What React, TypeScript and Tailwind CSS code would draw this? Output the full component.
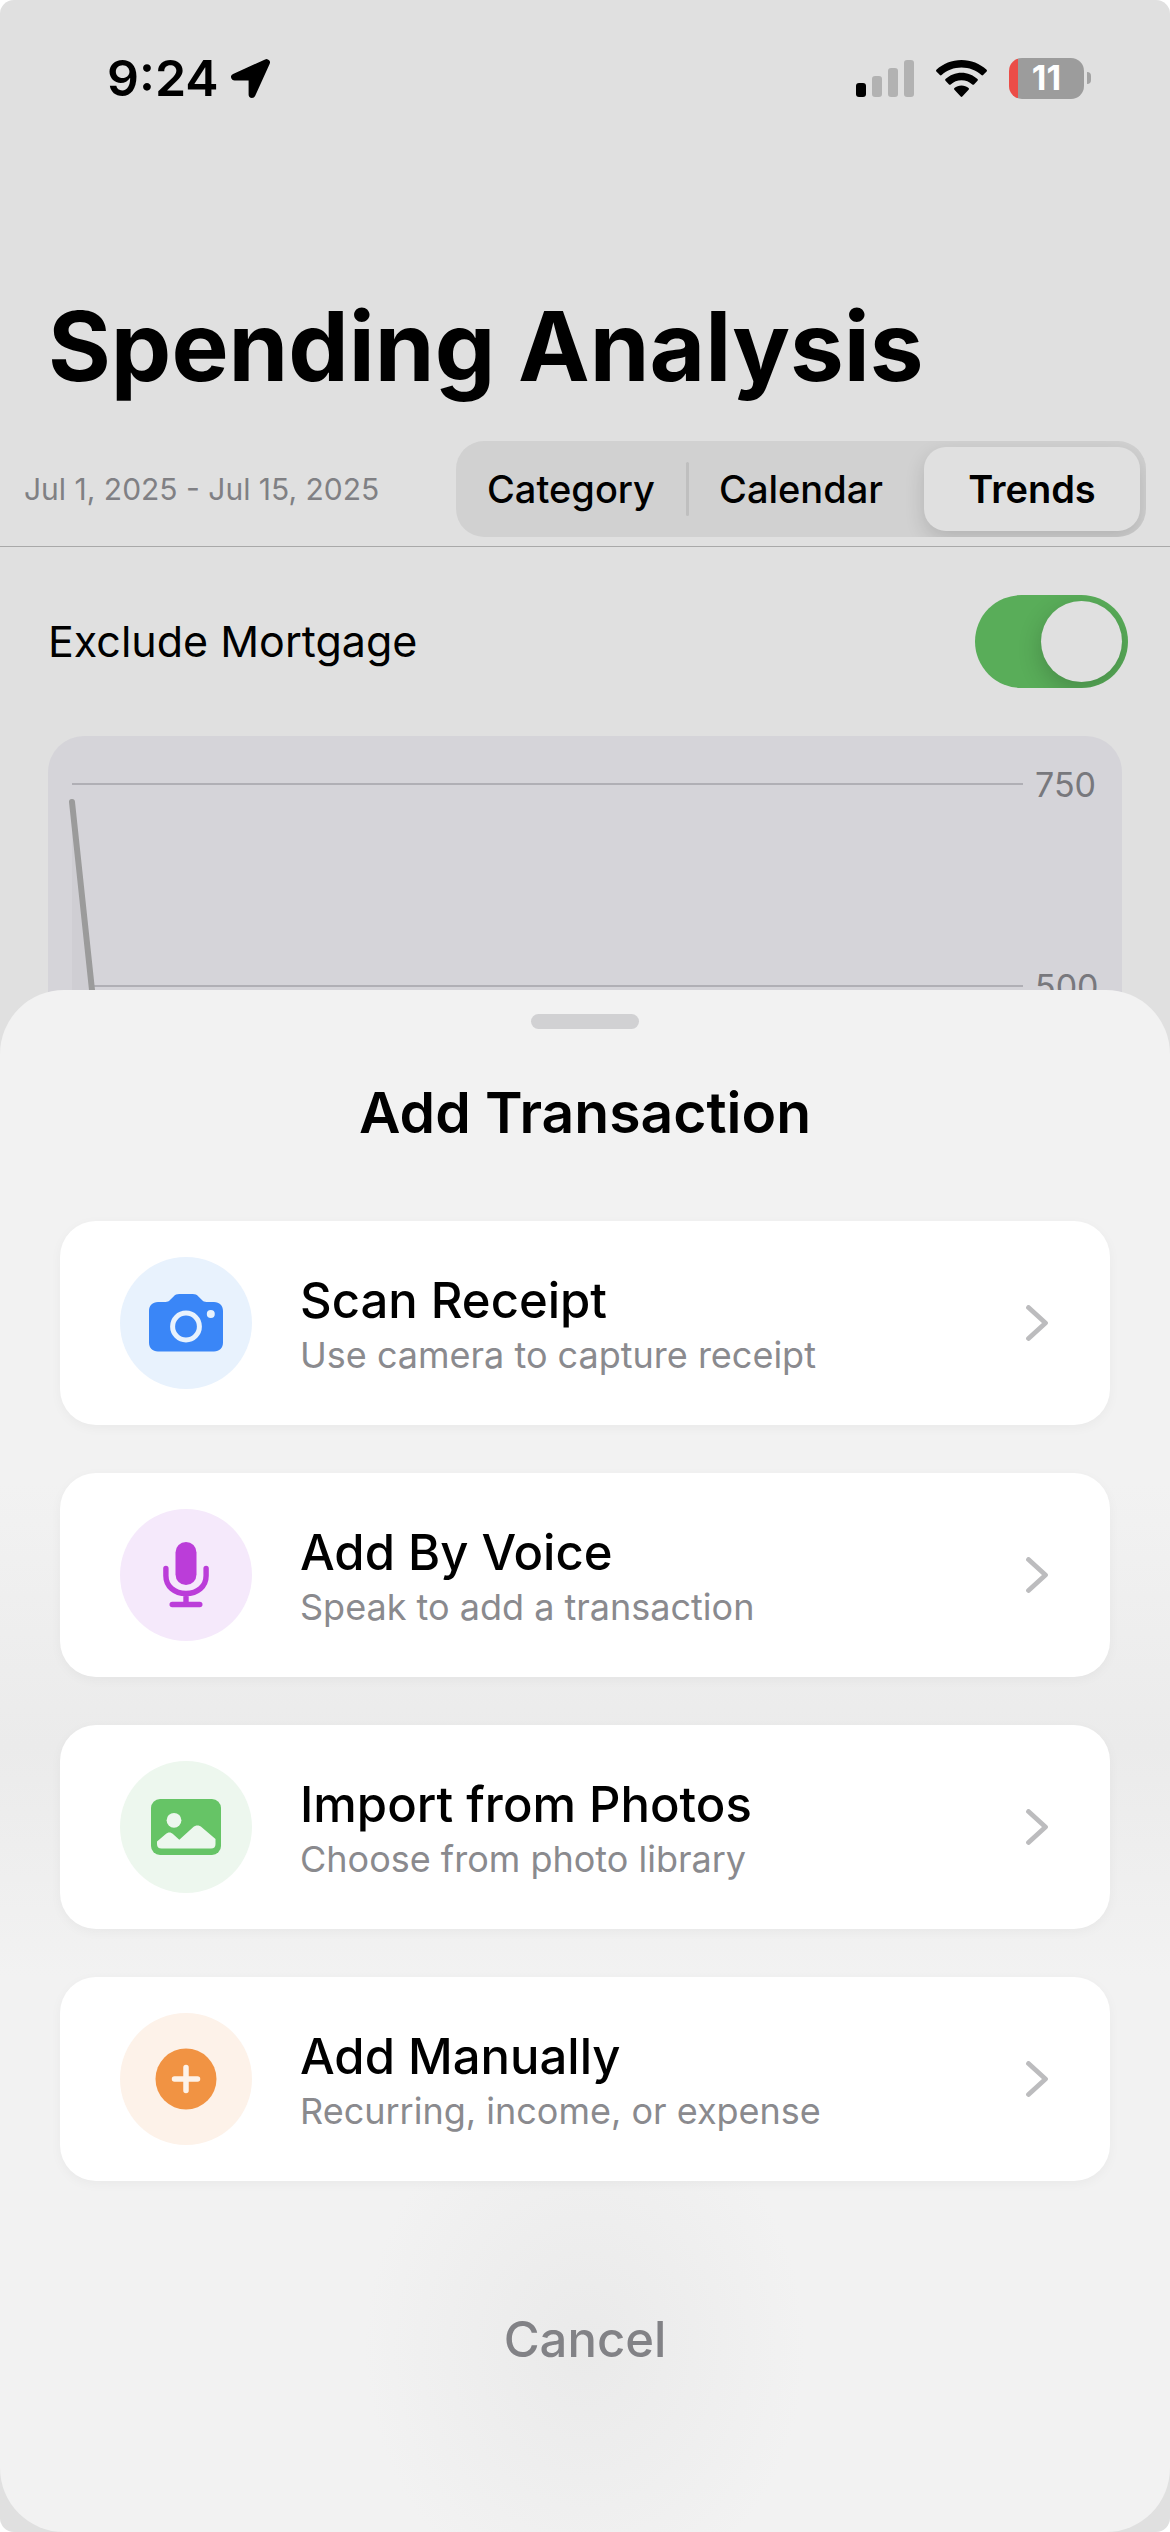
import type { ReactNode } from "react";

function LocationIcon() {
  return (
    <svg aria-hidden="true" viewBox="0 0 39 39" className="h-[39px] w-[39px]">
      <path d="M3.500 18H21v17.500L35.500 3.500Z" stroke="#000" strokeWidth="6.800" strokeLinejoin="round" />
    </svg>
  );
}

function SignalIcon() {
  return (
    <svg aria-hidden="true" viewBox="0 0 58 37" className="h-[37px] w-[58px]">
      <rect x="0" y="23" width="10" height="14" rx="3" fill="#000" />
      <rect x="16" y="16" width="10" height="21" rx="3" fill="#b2b2b2" />
      <rect x="32" y="8" width="10" height="29" rx="3" fill="#b2b2b2" />
      <rect x="48" y="0" width="10" height="37" rx="3" fill="#b2b2b2" />
    </svg>
  );
}

function WifiIcon() {
  return (
    <svg aria-hidden="true" viewBox="0 0 51 37" className="h-[37px] w-[51px]">
      <path d="M25.500 0C16 0 7 3.600.4 9.800c-.5.500-.5 1.200 0 1.700l3.500 3.600c.5.500 1.200.5 1.700 0C11 10.200 18 7.500 25.500 7.500S40 10.200 45.400 15.100c.5.500 1.200.5 1.700 0l3.500-3.600c.5-.5.5-1.200 0-1.700C44 3.600 35 0 25.500 0Z" />
      <path d="M25.500 12.700c-6 0-11.700 2.300-16 6.400-.5.500-.5 1.200 0 1.700l3.500 3.600c.5.500 1.200.5 1.700 0 2.900-2.700 6.700-4.200 10.800-4.200s7.900 1.500 10.800 4.200c.5.500 1.200.5 1.700 0l3.500-3.600c.5-.5.5-1.200 0-1.700-4.300-4.100-10-6.400-16-6.400Z" />
      <path d="M25.500 25.400c-2.700 0-5.200 1-7.100 2.700-.5.500-.5 1.200 0 1.700l6.300 6.700c.5.500 1.100.5 1.600 0l6.300-6.700c.5-.5.5-1.200 0-1.700-1.900-1.700-4.400-2.700-7.100-2.700Z" />
    </svg>
  );
}

function Battery() {
  return (
    <div className="flex items-center gap-[3px]">
      <div className="flex h-[41px] w-[75px] items-center justify-center overflow-hidden rounded-[13px] bg-[linear-gradient(to_right,#eb4d48_9px,#9c9c9c_9px)] text-[34px] leading-none font-bold text-white">
        11
      </div>
      <div className="h-[12px] w-[4px] rounded-r-full bg-[#a3a3a3]" />
    </div>
  );
}

function CameraIcon() {
  return (
    <svg aria-hidden="true" viewBox="0 0 74 58" className="h-[58px] w-[74px]">
      <path d="M9 8h7.500c2 0 3.200-.5 4.500-1.900l3.600-3.700C26.200.8 27.800 0 30.200 0h13.600c2.400 0 4 .8 5.600 2.400L53 6.100C54.300 7.500 55.500 8 57.500 8H65c5.500 0 9 3.500 9 9v31.500c0 5.500-3.500 9-9 9H9c-5.500 0-9-3.500-9-9V17c0-5.500 3.500-9 9-9Z" fill="#3a86f7" />
      <circle cx="37" cy="32.500" r="13.400" fill="none" stroke="#e8f2fd" strokeWidth="5" />
      <circle cx="61.800" cy="20" r="4" fill="#e8f2fd" />
    </svg>
  );
}

function MicIcon() {
  return (
    <svg aria-hidden="true" viewBox="0 0 46 66" className="h-[66px] w-[46px]" fill="none" stroke="#bb3dd9" strokeWidth="5.400" strokeLinecap="round">
      <rect x="12.500" y="0" width="21" height="43" rx="10.500" fill="#bb3dd9" stroke="none" />
      <path d="M2.900 26.500v7.200C2.900 44.500 11.500 51.500 23 51.500s20.100-7 20.100-17.800v-7.200M23 52v10.500M9.200 62.500h27.600" />
    </svg>
  );
}

function PhotoIcon() {
  return (
    <svg aria-hidden="true" viewBox="0 0 70 56" className="h-[56px] w-[70px]">
      <rect width="70" height="56" rx="9" fill="#66c466" />
      <circle cx="23" cy="21.300" r="7.400" fill="#edf7ee" />
      <path d="M6 45v-2.500l8.500-7.300c2.700-2.200 5.300-2.100 7.700 0l6.100 5.500 13.500-12.300c3.100-2.500 6.200-2.500 9.200 0L64.500 40v5c0 3-1.500 4.500-4.500 4.500H10.500C7.500 49.500 6 48 6 45Z" fill="#edf7ee" />
    </svg>
  );
}

function PlusIcon() {
  return (
    <svg aria-hidden="true" viewBox="0 0 62 62" className="h-[62px] w-[62px]">
      <circle cx="31" cy="31" r="30.500" fill="#f19343" />
      <path d="M31 19.500v23M19.500 31h23" stroke="#fdf2e9" strokeWidth="5.500" strokeLinecap="round" />
    </svg>
  );
}

function ChevronIcon() {
  return (
    <svg aria-hidden="true" viewBox="0 0 22 36" className="h-[36px] w-[22px]" fill="none" stroke="#bcbcbe" strokeWidth="4.800" strokeLinecap="round" strokeLinejoin="round">
      <path d="M2.500 2.500 19.500 18 2.500 33.500" />
    </svg>
  );
}

type Action = { title: string; detail: string; tint: string; icon: ReactNode };

const actions: Action[] = [
  { title: "Scan Receipt", detail: "Use camera to capture receipt", tint: "bg-[#e8f2fd]", icon: <CameraIcon /> },
  { title: "Add By Voice", detail: "Speak to add a transaction", tint: "bg-[#f5e9fb]", icon: <MicIcon /> },
  { title: "Import from Photos", detail: "Choose from photo library", tint: "bg-[#edf7ee]", icon: <PhotoIcon /> },
  { title: "Add Manually", detail: "Recurring, income, or expense", tint: "bg-[#fdf2e9]", icon: <PlusIcon /> },
];

function StatusBar() {
  return (
    <div className="flex h-[156px] items-center justify-between pr-[79px] pl-[107px]">
      <div className="flex items-center gap-3">
        <span className="text-[50px] leading-none font-semibold">9:24</span>
        <LocationIcon />
      </div>
      <div className="flex items-center gap-[22px]">
        <SignalIcon />
        <WifiIcon />
        <Battery />
      </div>
    </div>
  );
}

function ViewPicker() {
  return (
    <div className="grid h-24 w-[690px] grid-cols-3 overflow-hidden rounded-[28px] bg-[#d1d1d1] text-[38px]">
      <button type="button" className="font-medium">Category</button>
      <button type="button" className="relative font-medium before:absolute before:top-[21px] before:bottom-[21px] before:left-0 before:w-[3px] before:rounded-full before:bg-[#bfbfbf]">
        Calendar
      </button>
      <button type="button" aria-pressed="true" className="my-1.5 mr-1.5 ml-2 rounded-[22px] bg-[#e0e0e0] font-semibold shadow-[0_8px_20px_rgba(0,0,0,0.14)]">
        Trends
      </button>
    </div>
  );
}

function TrendChart() {
  return (
    <section aria-label="Spending trend" className="relative mx-12 mt-12 h-[560px] rounded-[36px] bg-[#d5d4d9] pt-[23px] pr-[26px] pl-6 text-[34px] text-[#78787d]">
      <div className="flex h-[50px] items-center gap-3">
        <div className="h-[2px] flex-1 bg-[#b0afb5]" />
        <span className="w-[61px]">750</span>
      </div>
      <div className="mt-[152px] flex h-[50px] items-center gap-3">
        <div className="h-[2px] flex-1 bg-[#b0afb5]" />
        <span className="w-[61px]">500</span>
      </div>
      <svg aria-hidden="true" viewBox="0 0 60 400" className="absolute top-[60px] left-[18px] h-[400px] w-[60px]">
        <path d="M6 6 46 382H6Z" fill="#cfced3" />
        <path d="M6 6 46 382" stroke="#9b9b9b" strokeWidth="6" strokeLinecap="round" />
      </svg>
    </section>
  );
}

function AddSheet() {
  return (
    <section
      role="dialog"
      aria-labelledby="sheet-title"
      className="absolute inset-x-0 bottom-0 flex flex-col items-center rounded-[64px] bg-[#f2f2f2] bg-[radial-gradient(ellipse_220px_260px_at_50%_88%,#eaeaea,transparent),linear-gradient(to_bottom,transparent_32%,#ebebeb_49%,transparent_64%)] px-15 pt-6 pb-[150px]"
    >
      <div className="h-[15px] w-[108px] rounded-full bg-[#d1d1d3]" />
      <h2 id="sheet-title" className="mt-12 text-[57px] leading-[72px] font-semibold">Add Transaction</h2>
      <ul className="mt-[72px] flex w-full flex-col gap-12">
        {actions.map((a) => (
          <li key={a.title}>
            <button type="button" className="flex h-[204px] w-full items-center rounded-[36px] bg-white pr-[62px] pl-15 text-left shadow-[0_3px_12px_rgba(0,0,0,0.04)]">
              <span className={`flex size-[132px] items-center justify-center rounded-full ${a.tint}`}>{a.icon}</span>
              <span className="ml-12 flex flex-1 flex-col pt-1">
                <span className="text-[49px] leading-[60px] font-medium">{a.title}</span>
                <span className="text-[36px] leading-[48px] text-[#8a8a8e]">{a.detail}</span>
              </span>
              <ChevronIcon />
            </button>
          </li>
        ))}
      </ul>
      <button type="button" className="mt-[117px] px-8 py-3 text-[49px] leading-[60px] font-medium text-[#828286]">Cancel</button>
    </section>
  );
}

export default function App() {
  return (
    <div className="min-h-screen bg-white font-['Inter',sans-serif] text-black">
      <div className="relative min-h-screen overflow-hidden rounded-[14px] bg-[#e0e0e0]">
        <StatusBar />
        <h1 className="mt-[130px] px-12 text-[96px] leading-[120px] font-bold">Spending Analysis</h1>
        <div className="mt-[35px] flex items-center justify-between border-b border-[#a9a9a9] pr-6 pb-[9px] pl-6">
          <span className="text-[30px] text-[#808084]">Jul 1, 2025 - Jul 15, 2025</span>
          <ViewPicker />
        </div>
        <label className="mt-12 flex items-center justify-between pr-[42px] pl-12 text-[43px]">
          Exclude Mortgage
          <input
            type="checkbox"
            role="switch"
            defaultChecked
            className="relative h-[93px] w-[153px] appearance-none overflow-hidden rounded-full bg-[#59ad59] before:absolute before:top-1.5 before:right-1.5 before:size-[81px] before:rounded-full before:bg-[#e0e0e0] before:shadow-[0_8px_24px_rgba(0,0,0,0.2)]"
          />
        </label>
        <TrendChart />
        <AddSheet />
      </div>
    </div>
  );
}
